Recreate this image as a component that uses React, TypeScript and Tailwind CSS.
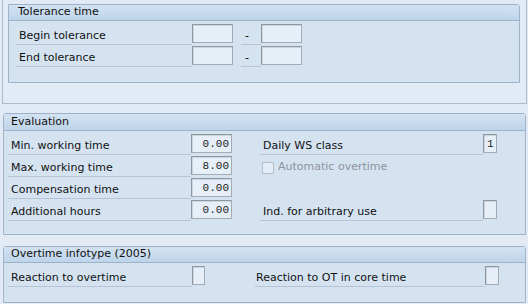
import React from "react";

const font = { fontFamily: '"DejaVu Sans", Verdana, sans-serif' };

function Input({ w, value, align = "right" }: { w: string; value?: string; align?: "right" | "left" }) {
  return (
    <div
      className={`${w} h-[19px] mt-[1px] border border-[#a3abb4] border-t-[#8f979f] border-l-[#8f979f] bg-[#e6eef7] shadow-[inset_1px_1px_0_#cbd5e0] flex items-center pt-[2px] ${align === "right" ? "justify-end pr-[2px]" : "justify-start pl-[3px]"} text-[11px] text-[#222]`}
      style={{ fontFamily: '"Liberation Mono", "Courier New", monospace' }}
    >
      {value}
    </div>
  );
}

function Header({ title, pl, h }: { title: string; pl: string; h: string }) {
  return (
    <div className={`${h} border-b border-[#9fb3c8] bg-gradient-to-b from-[#d2e2f2] to-[#bfd4ea] flex items-center ${pl} text-[11px] text-[#111]`}>
      {title}
    </div>
  );
}

function Label({ text, w, pl = "pl-[3px]", gray = false }: { text: string; w: string; pl?: string; gray?: boolean }) {
  return (
    <div className={`${w} h-[22px] border-b border-[#b5c5d6] flex items-center pt-[5px] ${pl} text-[11px] ${gray ? "text-[#8a8f96]" : "text-[#111]"}`}>
      {text}
    </div>
  );
}

export default function App() {
  return (
    <div className="w-[528px] h-[304px] bg-[#e2ebf5] overflow-hidden" style={font}>
      {/* Outer frame */}
      <div className="ml-[2px] w-[525px] h-[104px] border-x border-b border-[#a9bbcd] pl-[5px] pt-[4px] bg-[#e2ebf5]">
        <div className="w-[512px] h-[79px] border border-[#9fb3c8] rounded-tr-[3px] bg-[#d5e3f1]">
          <Header title="Tolerance time" pl="pl-[9px]" h="h-[16px]" />
          <div className="pt-[2px]">
            {["Begin tolerance", "End tolerance"].map((t) => (
              <div key={t} className="h-[22px] flex items-start">
                <div className="ml-[7px]">
                  <Label text={t} w="w-[176px]" pl="pl-[3px]" />
                </div>
                <Input w="w-[41px]" />
                <div className="ml-[8px] w-[20px] h-[22px] border-b border-[#b5c5d6] flex items-center pt-[5px] pl-[4px] text-[11px]">
                  -
                </div>
                <Input w="w-[41px]" />
              </div>
            ))}
          </div>
        </div>
      </div>

      {/* Evaluation */}
      <div className="mt-[9px] ml-[3px] w-[523px] h-[122px] border border-[#9fb3c8] rounded-t-[3px] bg-[#d5e3f1]">
        <Header title="Evaluation" pl="pl-[7px]" h="h-[17px]" />
        <div className="pt-[2px]">
          <div className="h-[22px] flex items-start">
            <div className="ml-[4px]"><Label text="Min. working time" w="w-[183px]" /></div>
            <Input w="w-[41px]" value="0.00" />
            <div className="ml-[28px]"><Label text="Daily WS class" w="w-[223px]" /></div>
            <Input w="w-[14px]" value="1" align="left" />
          </div>
          <div className="h-[22px] flex items-start">
            <div className="ml-[4px]"><Label text="Max. working time" w="w-[183px]" /></div>
            <Input w="w-[41px]" value="8.00" />
            <div className="ml-[30px] h-[22px] flex items-center pt-[3px] gap-[4px]">
              <div className="w-[12px] h-[12px] border border-[#b4bcc6] bg-[#e4ecf5] rounded-[1px]" />
              <span className="text-[11px] text-[#8d939a]">Automatic overtime</span>
            </div>
          </div>
          <div className="h-[22px] flex items-start">
            <div className="ml-[4px]"><Label text="Compensation time" w="w-[183px]" /></div>
            <Input w="w-[41px]" value="0.00" />
          </div>
          <div className="h-[22px] flex items-start">
            <div className="ml-[4px]"><Label text="Additional hours" w="w-[183px]" /></div>
            <Input w="w-[41px]" value="0.00" />
            <div className="ml-[28px]"><Label text="Ind. for arbitrary use" w="w-[223px]" /></div>
            <Input w="w-[14px]" />
          </div>
        </div>
      </div>

      {/* Overtime infotype */}
      <div className="mt-[11px] ml-[3px] w-[523px] h-[57px] border border-[#9fb3c8] rounded-t-[3px] bg-[#d5e3f1]">
        <Header title="Overtime infotype (2005)" pl="pl-[7px]" h="h-[16px]" />
        <div className="pt-[2px]">
          <div className="h-[22px] flex items-start">
            <div className="ml-[4px]"><Label text="Reaction to overtime" w="w-[184px]" /></div>
            <Input w="w-[13px]" />
            <div className="ml-[50px]"><Label text="Reaction to OT in core time" w="w-[230px]" pl="pl-[1px]" /></div>
            <Input w="w-[14px]" />
          </div>
        </div>
      </div>
    </div>
  );
}
